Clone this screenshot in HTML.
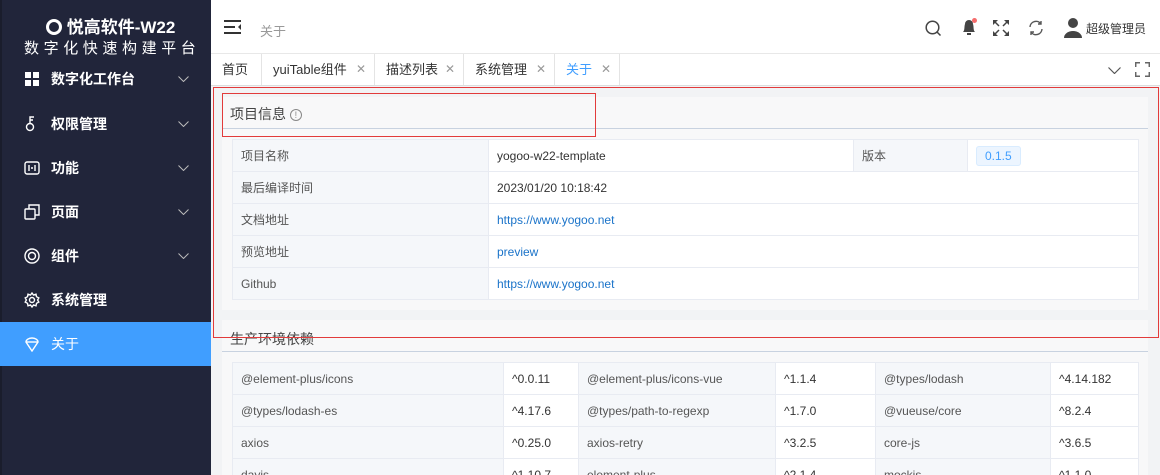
<html style="overflow:hidden;height:475px"><head><style>
*{margin:0;padding:0;box-sizing:border-box}
body{width:1160px;height:475px;overflow:hidden;font-family:"Liberation Sans","Noto Sans CJK SC",sans-serif;background:#f2f3f5;position:relative;font-size:13px;color:#333}
.abs{position:absolute}
.side{left:0;top:0;width:211px;height:475px;background:#21253a;color:#fff}
.mi{position:absolute;left:0;width:211px;height:44px;font-size:14px;line-height:44px;padding-left:51px}
.mi svg.ic{position:absolute;left:24px;top:14px}
.mi svg.ar{position:absolute;left:178px;top:19px}
.hdr{left:211px;top:0;width:949px;height:54px;background:#fff;border-bottom:1px solid #e8e8e8}
.tabs{left:211px;top:54px;width:949px;height:32px;background:#fff;border-bottom:1px solid #ddd}
.tab{position:absolute;top:0;height:31px;line-height:31px;font-size:13px;color:#333;border-right:1px solid #e4e4e4;padding-left:11px}
.tab i{font-style:normal;color:#999;position:absolute;right:8px;font-size:12px}
.card{background:#f8f8f9}
table{border-collapse:collapse;position:absolute;font-size:12px}
td{border:1px solid #e8ebf2;height:32px;padding-left:8px;color:#333}
td.l{background:#f5f7fa;color:#555}
td.v{background:#fff}
a{color:#1a73c9;text-decoration:none}
</style></head><body>
<div class="abs side">
 <div class="abs" style="left:0;top:0;width:2px;height:475px;background:#1a1d2c"></div>
 <div class="abs" style="left:46px;top:13px;font-size:17px;font-weight:bold;white-space:nowrap">
  <span style="display:inline-block;width:16px;height:16px;border:3px solid #fff;border-radius:50%;vertical-align:-2px"></span> 悦高软件-W22</div>
 <div class="abs" style="left:24px;top:37px;font-size:15px;letter-spacing:4.6px;white-space:nowrap">数字化快速构建平台</div>
 <div class="mi" style="top:57px"><svg class="ic" width="16" height="16"><rect x="1" y="1" width="6" height="6" fill="#fff"/><rect x="9" y="1" width="6" height="6" fill="#fff"/><rect x="1" y="9" width="6" height="6" fill="#fff"/><rect x="9" y="9" width="6" height="6" fill="#fff"/></svg><b>数字化工作台</b><svg class="ar" width="11" height="6" fill="none" stroke="#bbb"><path d="M0.5 0.5l5 5 5-5"/></svg></div>
 <div class="mi" style="top:102px"><svg class="ic" width="16" height="16" fill="none" stroke="#fff" stroke-width="1.4"><circle cx="6" cy="11" r="3.5"/><path d="M6 7.5V1h4M6 4h3"/></svg><b>权限管理</b><svg class="ar" width="11" height="6" fill="none" stroke="#bbb"><path d="M0.5 0.5l5 5 5-5"/></svg></div>
 <div class="mi" style="top:146px"><svg class="ic" width="16" height="16" fill="none" stroke="#fff" stroke-width="1.4"><rect x="1" y="2" width="14" height="12" rx="2"/><path d="M5 5v6M11 5v6M7 8h2"/></svg><b>功能</b><svg class="ar" width="11" height="6" fill="none" stroke="#bbb"><path d="M0.5 0.5l5 5 5-5"/></svg></div>
 <div class="mi" style="top:190px"><svg class="ic" width="16" height="16" fill="none" stroke="#fff" stroke-width="1.4"><rect x="1" y="5" width="10" height="10" rx="1"/><path d="M5 5V1h10v10h-4"/></svg><b>页面</b><svg class="ar" width="11" height="6" fill="none" stroke="#bbb"><path d="M0.5 0.5l5 5 5-5"/></svg></div>
 <div class="mi" style="top:234px"><svg class="ic" width="16" height="16" fill="none" stroke="#fff" stroke-width="1.4"><circle cx="8" cy="8" r="7"/><circle cx="8" cy="8" r="3.5"/></svg><b>组件</b><svg class="ar" width="11" height="6" fill="none" stroke="#bbb"><path d="M0.5 0.5l5 5 5-5"/></svg></div>
 <div class="mi" style="top:278px"><svg class="ic" width="16" height="16" fill="none" stroke="#fff" stroke-width="1.4"><circle cx="8" cy="8" r="2.5"/><path d="M8 1l1.5 2 2.5-.8.5 2.5 2.3 1.2-1.2 2.1 1.2 2.1-2.3 1.2-.5 2.5-2.5-.8L8 15l-1.5-2-2.5.8-.5-2.5-2.3-1.2L2.4 8 1.2 5.9l2.3-1.2.5-2.5 2.5.8z"/></svg><b>系统管理</b></div>
 <div class="mi" style="top:322px;background:#409eff"><svg class="ic" width="16" height="16" fill="none" stroke="#fff" stroke-width="1.4"><path d="M2 6a6 4 0 0 1 12 0L8 15z"/><path d="M2 6h12"/></svg>关于</div>
</div>
<div class="abs hdr">
 <svg class="abs" style="left:13px;top:20px" width="18" height="14"><path d="M0 1h17M0 7h11M0 13h17" stroke="#333" stroke-width="2"/><path d="M17 4l-3 3 3 3z" fill="#333"/></svg>
 <div class="abs" style="left:49px;top:21px;color:#999;font-size:13px">关于</div>
 <svg class="abs" style="left:714px;top:20px" width="17" height="17" fill="none" stroke="#444" stroke-width="1.5"><circle cx="7.5" cy="7.5" r="6.3"/><path d="M12 12l3.5 3.5"/></svg>
 <svg class="abs" style="left:750px;top:18px" width="16" height="18"><path d="M2 14c2-2 1-5 2-8a4 4 0 0 1 8 0c1 3 0 6 2 8z" fill="#444"/><rect x="6" y="15" width="4" height="2" fill="#444"/><circle cx="13.5" cy="2.5" r="2.5" fill="#f56c6c"/></svg>
 <svg class="abs" style="left:782px;top:20px" width="16" height="16" fill="#444"><path d="M0 0h5L0 5zM16 0v5L11 0zM0 16v-5l5 5zM16 16h-5l5-5z"/><path d="M2 2l4 4M14 2l-4 4M2 14l4-4M14 14l-4-4" stroke="#444" stroke-width="1.5"/></svg>
 <svg class="abs" style="left:817px;top:20px" width="16" height="16" fill="none" stroke="#555" stroke-width="1.4"><path d="M2 7a6 6 0 0 1 11-3M14 9a6 6 0 0 1-11 3"/><path d="M13 1v3h-3M3 15v-3h3"/></svg>
 <svg class="abs" style="left:853px;top:17px" width="18" height="22" fill="#444"><circle cx="9" cy="6" r="5"/><path d="M0 21a9 7 0 0 1 18 0z"/></svg>
 <div class="abs" style="left:875px;top:20px;font-size:12px;color:#333">超级管理员</div>
</div>
<div class="abs tabs">
 <div class="tab" style="left:0;width:51px">首页</div>
 <div class="tab" style="left:51px;width:113px">yuiTable组件<i>✕</i></div>
 <div class="tab" style="left:164px;width:89px">描述列表<i>✕</i></div>
 <div class="tab" style="left:253px;width:91px">系统管理<i>✕</i></div>
 <div class="tab" style="left:344px;width:65px;color:#409eff">关于<i>✕</i></div>
 <svg class="abs" style="left:897px;top:13px" width="13" height="7" fill="none" stroke="#555" stroke-width="1.2"><path d="M0.5 0.5l6 6 6-6"/></svg>
 <svg class="abs" style="left:924px;top:8px" width="15" height="15" fill="none" stroke="#666" stroke-width="1.5"><path d="M0.7 5V0.7h4.3M10 0.7h4.3V5M14.3 10v4.3H10M5 14.3H0.7V10"/></svg>
</div>
<div class="abs card" style="left:222px;top:97px;width:926px;height:213px">
 <div class="abs" style="left:8px;top:7px;font-size:14px;color:#444">项目信息 <span style="display:inline-block;width:12px;height:12px;border:1px solid #888;border-radius:50%;font-size:9px;line-height:10px;text-align:center;color:#888;vertical-align:1px">!</span></div>
 <div class="abs" style="left:0;top:31px;width:926px;height:1px;background:#c8d2e0"></div>
</div>
<table style="left:232px;top:139px;width:907px">
 <tr><td class="l" style="width:256px">项目名称</td><td class="v" style="width:365px">yogoo-w22-template</td><td class="l" style="width:114px">版本</td><td class="v"><span style="background:#ecf5ff;border:1px solid #d9ecff;color:#409eff;border-radius:3px;padding:2px 8px">0.1.5</span></td></tr>
 <tr><td class="l">最后编译时间</td><td class="v" colspan="3">2023/01/20 10:18:42</td></tr>
 <tr><td class="l">文档地址</td><td class="v" colspan="3"><a>https://www.yogoo.net</a></td></tr>
 <tr><td class="l">预览地址</td><td class="v" colspan="3"><a>preview</a></td></tr>
 <tr><td class="l">Github</td><td class="v" colspan="3"><a>https://www.yogoo.net</a></td></tr>
</table>
<div class="abs card" style="left:222px;top:320px;width:926px;height:160px">
 <div class="abs" style="left:8px;top:9px;font-size:14px;color:#444">生产环境依赖</div>
 <div class="abs" style="left:0;top:31px;width:926px;height:1px;background:#c8d2e0"></div>
</div>
<table style="left:232px;top:362px;width:907px">
 <tr><td class="l" style="width:271px">@element-plus/icons</td><td class="v" style="width:75px">^0.0.11</td><td class="l" style="width:197px">@element-plus/icons-vue</td><td class="v" style="width:100px">^1.1.4</td><td class="l" style="width:175px">@types/lodash</td><td class="v">^4.14.182</td></tr>
 <tr><td class="l">@types/lodash-es</td><td class="v">^4.17.6</td><td class="l">@types/path-to-regexp</td><td class="v">^1.7.0</td><td class="l">@vueuse/core</td><td class="v">^8.2.4</td></tr>
 <tr><td class="l">axios</td><td class="v">^0.25.0</td><td class="l">axios-retry</td><td class="v">^3.2.5</td><td class="l">core-js</td><td class="v">^3.6.5</td></tr>
 <tr><td class="l">dayjs</td><td class="v">^1.10.7</td><td class="l">element-plus</td><td class="v">^2.1.4</td><td class="l">mockjs</td><td class="v">^1.1.0</td></tr>
</table>
<div class="abs" style="left:213px;top:87px;width:946px;height:251px;border:1px solid #e23b3b"></div>
<div class="abs" style="left:222px;top:93px;width:374px;height:44px;border:1px solid #e23b3b"></div>
</body></html>
